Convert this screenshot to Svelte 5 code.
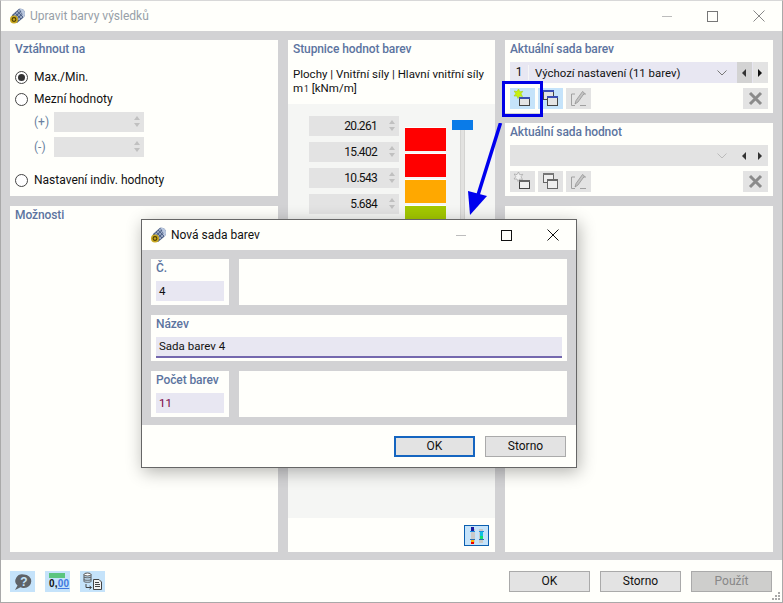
<script>
  const scale = [
    { v: '20.261', c: '#ff0000' },
    { v: '15.402', c: '#ff0000' },
    { v: '10.543', c: '#ffa800' },
    { v: '5.684', c: '#a3c800' }
  ];
</script>

{#snippet logo()}
  <svg class="logo" viewBox="0 0 16 16" width="16" height="16">
    <path d="M3 7 L10 .800 Q15 0 16 4.500 Q16.500 8 14 10 L8 15 L2 12 Z" fill="#4f6288"/>
    <path d="M10 .800 Q15 0 16 4.500 Q16.500 8 14 10 Q14 5 10 .800 Z" fill="#b9c7de"/>
    <path d="M5 5.500 L11 12 M7 3.700 L13 10 M9 2 L14.500 8.500 M5 8 L11 2 M7 10 L13 4 M9 12 L15 6" stroke="#c7d3e6" stroke-width=".6" fill="none"/>
    <circle cx="5" cy="11.500" r="4" fill="#c9a820"/>
    <circle cx="5" cy="11.500" r="1.900" fill="none" stroke="#4c3d00" stroke-width="1.100"/>
  </svg>
{/snippet}

{#snippet newIcon(active)}
  <svg viewBox="0 0 25 21" width="25" height="21">
    <path d="M8.500 1 L9.800 3.800 12.800 3.300 11 5.800 12.500 8.500 9.500 8 8 10.500 7 8 4 8 5.800 5.700 4.200 3 7 3.600z" fill={active ? '#c8f010' : '#f0f0f0'} stroke={active ? '#a8d010' : '#999'} stroke-width=".6"/>
    <rect x="9.500" y="9.500" width="10" height="8" fill={active ? '#e4e4e4' : '#eeeeee'} stroke="#444"/>
    <rect x="9" y="9" width="11" height="2" fill={active ? '#3a4db4' : '#666'}/>
  </svg>
{/snippet}

{#snippet copyIcon(active)}
  <svg viewBox="0 0 25 21" width="25" height="21">
    <rect x="5.500" y="2.500" width="10" height="9" fill={active ? '#e4e4e4' : '#eeeeee'} stroke={active ? '#444' : '#666'}/>
    <rect x="5" y="2" width="11" height="2" fill={active ? '#3a4db4' : '#777'}/>
    <rect x="9.500" y="8.500" width="10" height="9" fill={active ? '#e4e4e4' : '#eeeeee'} stroke={active ? '#444' : '#666'}/>
    <rect x="9" y="8" width="11" height="2" fill={active ? '#3a4db4' : '#666'}/>
  </svg>
{/snippet}

{#snippet editIcon()}
  <svg viewBox="0 0 25 21" width="25" height="21">
    <path d="M9 6 H5.500 V17.500 H9 M14 17.500 H20 M17 6 H20" fill="none" stroke="#a0a0a0"/>
    <path d="M9 16 l1-3.500 6.500-9 2 1.500-6.500 9z" fill="#c4c4c4" stroke="#8c8c8c" stroke-width=".7"/>
  </svg>
{/snippet}

{#snippet xIcon()}
  <svg viewBox="0 0 25 21" width="25" height="21">
    <path d="M7 5 L18 16 M18 5 L7 16" stroke="#8b8b8b" stroke-width="3"/>
  </svg>
{/snippet}

{#snippet spin()}
  <span class="spin"><i class="up"></i><i class="down"></i></span>
{/snippet}

{#snippet nav(dark)}
  <span class="navbtn first" class:dark>
    <svg viewBox="0 0 5 8" width="5" height="8"><path d="M4 0 V8 L0 4z" fill="#333"/></svg>
  </span>
  <span class="navbtn" class:dark>
    <svg viewBox="0 0 5 8" width="5" height="8"><path d="M0 0 V8 L4 4z" fill={dark ? '#111' : '#333'}/></svg>
  </span>
{/snippet}

<div class="win">
  <header class="title">
    {@render logo()}
    <span class="ttext muted">Upravit barvy výsledků</span>
    <span class="wctl">
      <span class="minline faint"></span>
      <span class="maxbox greyed"></span>
      <svg class="close" viewBox="0 0 12 12" width="12" height="12"><path d="M.5.5 11.500 11.500M11.500.5.500 11.500" stroke="#888" fill="none"/></svg>
    </span>
  </header>

  <main class="body">
    <div class="col">
      <section class="panel rel">
        <h3>Vztáhnout na</h3>
        <div class="radios">
          <label class="radio"><span class="dot on"></span>Max./Min.</label>
          <label class="radio second"><span class="dot"></span>Mezní hodnoty</label>
          <div class="lim"><span class="sign">(+)</span><span class="numbox">{@render spin()}</span></div>
          <div class="lim l2"><span class="sign">(-)</span><span class="numbox">{@render spin()}</span></div>
          <label class="radio third"><span class="dot"></span>Nastavení indiv. hodnoty</label>
        </div>
      </section>
      <section class="panel grow">
        <h3>Možnosti</h3>
      </section>
    </div>

    <section class="panel mid">
      <h3>Stupnice hodnot barev</h3>
      <p class="desc">Plochy | Vnitřní síly | Hlavní vnitřní síly<br />m<span class="sub">1</span> [kNm/m]</p>
      <div class="scale">
        <div class="rows">
          {#each scale as s}
            <div class="srow">
              <span class="val">{s.v}{@render spin()}</span>
              <span class="swatch" style="background:{s.c}"></span>
            </div>
          {/each}
        </div>
        <div class="track"><span class="handle"></span></div>
      </div>
      <div class="midfoot">
        <span class="tinybtn">
          <svg viewBox="0 0 23 19" width="23" height="19">
            <rect x="6" y="3" width="4" height="14" fill="#c9c9c9"/>
            <rect x="14" y="3" width="4" height="14" fill="#c9c9c9"/>
            <rect x="6" y="1" width="3" height="4" fill="#1a1aa0"/>
            <rect x="5" y="5" width="5" height="1" fill="#1d8fe0"/>
            <rect x="5" y="13" width="5" height="1" fill="#2a6fb0"/>
            <rect x="6" y="14" width="3" height="2" fill="#ffb000"/>
            <rect x="6" y="16" width="3" height="2" fill="#f00000"/>
            <rect x="15" y="6" width="3" height="4" fill="#10c0e0"/>
            <rect x="15" y="10" width="3" height="3" fill="#10e070"/>
            <rect x="14" y="5" width="5" height="1" fill="#1d8fe0"/>
            <rect x="14" y="13" width="5" height="1" fill="#2a6fb0"/>
          </svg>
        </span>
      </div>
    </section>

    <div class="col">
      <section class="panel set">
        <h3>Aktuální sada barev</h3>
        <div class="combo">
          <span class="cnum">1</span><span class="cname">Výchozí nastavení (11 barev)</span>
          <svg class="chev" viewBox="0 0 10 6" width="10" height="6"><path d="M.5.5 5 5 9.500.5" fill="none" stroke="#777"/></svg>
          {@render nav(true)}
        </div>
        <div class="tools">
          <span class="tb blue">{@render newIcon(true)}</span>
          <span class="tb blue">{@render copyIcon(true)}</span>
          <span class="tb">{@render editIcon()}</span>
          <span class="tb xb">{@render xIcon()}</span>
        </div>
      </section>
      <section class="panel set">
        <h3>Aktuální sada hodnot</h3>
        <div class="combo off">
          <span class="cname"></span>
          <svg class="chev" viewBox="0 0 10 6" width="10" height="6"><path d="M.5.5 5 5 9.500.5" fill="none" stroke="#bbb"/></svg>
          {@render nav(false)}
        </div>
        <div class="tools">
          <span class="tb">{@render newIcon(false)}</span>
          <span class="tb">{@render copyIcon(false)}</span>
          <span class="tb">{@render editIcon()}</span>
          <span class="tb xb">{@render xIcon()}</span>
        </div>
      </section>
      <section class="panel grow"></section>
    </div>
  </main>

  <footer class="foot">
    <span class="fb">
      <svg viewBox="0 0 25 21" width="25" height="21">
        <path d="M14 3.500a7 6.500 0 0 1 0 13.500c-1.500 0-2.500-.3-3.500-.8L5 19l2.500-4.500a7 6.500 0 0 1 6.500-11z" fill="#5f6368"/>
        <text x="14" y="14.500" font-size="12" font-weight="700" font-family="Liberation Sans" text-anchor="middle" fill="#c5e3fa">?</text>
      </svg>
    </span>
    <span class="fb dec">
      <span class="ruler"></span>
      <span class="dectext"><b>0,</b><u>00</u></span>
    </span>
    <span class="fb">
      <svg viewBox="0 0 25 21" width="25" height="21">
        <ellipse cx="7.500" cy="3.500" rx="3.500" ry="1.500" fill="#fff" stroke="#555"/>
        <path d="M4 3.500v7c0 1 7 1 7 0v-7M4 6c0 1 7 1 7 0M4 8.500c0 1 7 1 7 0" fill="none" stroke="#555"/>
        <path d="M6 13v3.500h5M9.500 15l2 1.500-2 1.500" fill="none" stroke="#444"/>
        <path d="M13.500 8.500H19l2.500 2.500v7.500h-8z" fill="#f4f4f4" stroke="#444"/>
        <path d="M15 11.500h4M15 13.500h5M15 15.500h5" stroke="#444"/>
      </svg>
    </span>
    <span class="spacer"></span>
    <span class="btn">OK</span>
    <span class="btn">Storno</span>
    <span class="btn dis">Použít</span>
    <svg class="grip" viewBox="0 0 10 10" width="10" height="10"><path d="M7 1h2v2H7zM4 4h2v2H4zM7 4h2v2H7zM1 7h2v2H1zM4 7h2v2H4zM7 7h2v2H7z" fill="#a9a9a9"/></svg>
  </footer>

  <div class="highlight"></div>
  <svg class="arrow" viewBox="0 0 50 100" width="50" height="100">
    <path d="M35.500 0 L13 72" stroke="#0000ee" stroke-width="3.500" fill="none"/>
    <path d="M3 68 L22 73 L5 92 Z" fill="#0000ee"/>
  </svg>

  <div class="dialog">
    <header class="dtitle">
      {@render logo()}
      <span class="ttext">Nová sada barev</span>
      <span class="wctl">
        <span class="minline"></span>
        <span class="maxbox"></span>
        <svg class="close" viewBox="0 0 12 12" width="12" height="12"><path d="M.5.5 11.500 11.500M11.500.5.500 11.500" stroke="#111" fill="none"/></svg>
      </span>
    </header>
    <div class="dbody">
      <div class="drow">
        <section class="panel small"><h3>Č.</h3><div class="field">4</div></section>
        <section class="panel fill"></section>
      </div>
      <section class="panel nameP"><h3>Název</h3><div class="field name">Sada barev 4</div></section>
      <div class="drow">
        <section class="panel small"><h3>Počet barev</h3><div class="field count">11</div></section>
        <section class="panel fill"></section>
      </div>
    </div>
    <div class="dfoot">
      <span class="btn dok">OK</span>
      <span class="btn">Storno</span>
    </div>
  </div>
</div>

<style>
  :global(body) { margin: 0; background: #fff; }
  .win {
    position: relative; width: 783px; height: 603px; box-sizing: border-box; overflow: hidden;
    border: 1px solid #a9a9a9; border-top-color: #d8d8d8; background: #fffffb;
    font-family: Roboto, "Noto Sans", sans-serif; font-size: 12px; color: #111;
    display: flex; flex-direction: column;
  }
  .title { height: 30px; flex: none; display: flex; align-items: center; padding-left: 8px; }
  .logo { flex: none; }
  .ttext { margin-left: 5px; font-size: 12px; }
  .muted { color: #97a0a8; }
  .wctl { margin-left: auto; display: flex; align-items: center; height: 100%; }
  .minline { width: 10px; height: 1px; background: #bdbdbd; }
  .faint { background: #bcbcbc; }
  .maxbox { width: 9px; height: 9px; border: 1px solid #111; margin-left: 35px; }
  .greyed { border-color: #777; }
  .close { margin-left: 35px; margin-right: 17px; }

  .body {
    flex: 1; display: grid; grid-template-columns: 268px 207px 268px; gap: 10px;
    padding: 9px 9px 8px; background: #d2d2d4; min-height: 0;
  }
  .col { display: flex; flex-direction: column; gap: 10px; min-height: 0; }
  .panel { background: #fffffb; padding: 2px 5px 0; box-sizing: border-box; }
  .grow { flex: 1; }
  h3 { margin: 0; font-size: 12px; line-height: 14px; font-weight: 500; color: #5c74a0; letter-spacing: -.1px; }

  .rel { height: 156px; }
  .radios { padding-top: 13px; display: flex; flex-direction: column; }
  .radio { display: flex; align-items: center; height: 16px; gap: 6px; color: #111; }
  .second { margin-top: 6px; }
  .third { margin-top: 15px; }
  .dot { width: 11px; height: 11px; border: 1px solid #444; border-radius: 50%; flex: none; position: relative; background: #fff; }
  .on::after { content: ""; position: absolute; inset: 2px; border-radius: 50%; background: #333; }
  .lim { display: flex; align-items: center; margin: 5px 0 0 19px; height: 20px; }
  .l2 { margin-top: 5px; }
  .sign { width: 20px; color: #6a7fa0; }
  .numbox { width: 90px; height: 20px; background: #e3e3e3; position: relative; display: block; }
  .spin { position: absolute; right: 4px; top: 4px; display: flex; flex-direction: column; gap: 3px; }
  .spin i { display: block; width: 0; height: 0; border: 3px solid transparent; border-top-width: 0; border-bottom-width: 4px; }
  .spin .up { border-bottom-color: #c0c0c0; }
  .spin .down { border-bottom-width: 0; border-top-width: 4px; border-top-color: #c0c0c0; }

  .mid { display: flex; flex-direction: column; padding: 2px 0 0; }
  .mid h3 { padding-left: 5px; }
  .desc { margin: 12px 0 0; padding: 0 5px; line-height: 13.500px; height: 36px; white-space: nowrap; font-size: 11.500px; }
  .sub { font-size: 8.500px; margin-left: 1px; }
  .scale { flex: 1; background: #f5f6f4; padding: 12px 0 0 21px; display: flex; position: relative; min-height: 0; }
  .rows { display: flex; flex-direction: column; gap: 6px; }
  .srow { display: flex; gap: 6px; height: 20px; }
  .val { width: 90px; height: 20px; background: #e3e3e3; position: relative; display: block; box-sizing: border-box; padding-right: 22px; text-align: right; line-height: 20px; font-size: 12px; letter-spacing: -.7px; }
  .swatch { width: 41px; height: 24px; margin-top: 11px; border-top: 1px solid #fff; box-sizing: border-box; }
  .track { position: absolute; left: 172px; top: 16px; width: 5px; height: 100px; box-sizing: border-box; background: #e2e2e0; border: 1px solid #d4d4d2; border-width: 0 1px; }
  .handle { position: absolute; left: -9px; top: 0; width: 21px; height: 10px; background: #0a7be8; }
  .midfoot { height: 34px; flex: none; display: flex; justify-content: flex-end; align-items: center; padding-right: 6px; }
  .tinybtn { width: 25px; height: 21px; box-sizing: border-box; border: 1px solid #0b5fb0; background: #c5e3fa; display: flex; }

  .set { height: 73px; }
  .combo { margin-top: 6px; height: 21px; background: #e8e7f2; display: flex; align-items: center; position: relative; }
  .off { background: #e3e3e3; }
  .cnum { width: 18px; text-align: center; border-right: 1px solid #f6f6f6; flex: none; line-height: 15px; }
  .cname { margin-left: 6px; flex: 1; font-size: 11.400px; }
  .chev { margin-right: 9px; }
  .navbtn { width: 15px; height: 21px; display: flex; align-items: center; justify-content: center; margin-left: 1px; background: #e3e3e3; }
  .navbtn.dark.first { background: #d3d3d3; }
  .tools { display: flex; gap: 3px; margin-top: 5px; }
  .tb { width: 25px; height: 21px; background: #e3e3e3; display: flex; }
  .tb.blue { background: #c5e3fa; }
  .xb { margin-left: auto; }

  .foot { height: 42px; flex: none; display: flex; align-items: center; padding: 0 10px 0 9px; gap: 10px; position: relative; background: #fffffb; }
  .fb { width: 25px; height: 21px; background: #c5e3fa; display: flex; position: relative; }
  .spacer { flex: 1; }
  .btn { width: 81px; height: 21px; box-sizing: border-box; border: 1px solid #aaa; background: #e3e3e3; display: flex; align-items: center; justify-content: center; font-size: 12px; }
  .dis { background: #cececc; color: #888; }
  .grip { position: absolute; right: 1px; bottom: 1px; }
  .ruler { position: absolute; left: 4px; top: 2px; width: 16px; height: 5px; background: #5bc57e; }
  .dectext { position: absolute; left: 4px; top: 7px; font-family: "Liberation Sans", sans-serif; font-size: 10px; line-height: 12px; letter-spacing: .2px; }
  .dectext b { color: #111; }
  .dectext u { color: #3f78e0; font-weight: 700; }

  .highlight { position: absolute; left: 501px; top: 80px; width: 41px; height: 36px; box-sizing: border-box; border: 3px solid #0000e6; }
  .arrow { position: absolute; left: 464px; top: 122px; }

  .dialog {
    position: absolute; left: 140px; top: 218px; width: 436px; height: 249px; box-sizing: border-box;
    border: 1px solid #666; background: #fffffb; box-shadow: 2px 4px 16px rgba(0,0,0,.3);
    display: flex; flex-direction: column;
  }
  .dtitle { height: 30px; flex: none; display: flex; align-items: center; padding-left: 8px; }
  .dtitle .ttext { color: #111; }
  .dbody { background: #d2d2d4; padding: 9px; display: flex; flex-direction: column; gap: 10px; height: 175px; box-sizing: border-box; flex: none; }
  .drow { display: flex; gap: 10px; height: 46px; flex: none; }
  .small { width: 78px; }
  .fill { flex: 1; }
  .nameP { height: 46px; flex: none; }
  .field { margin-top: 6px; height: 20px; background: #e8e7f2; line-height: 20px; padding-left: 3px; color: #111; font-size: 11.500px; }
  .small .count { color: #7a0040; }
  .name { border-bottom: 2px solid #7468ae; height: 21px; box-sizing: border-box; line-height: 19px; }
  .dfoot { flex: 1; display: flex; justify-content: flex-end; align-items: center; gap: 10px; padding: 0 10px; }
  .dok { border: 2px solid #1565c0; }
</style>
